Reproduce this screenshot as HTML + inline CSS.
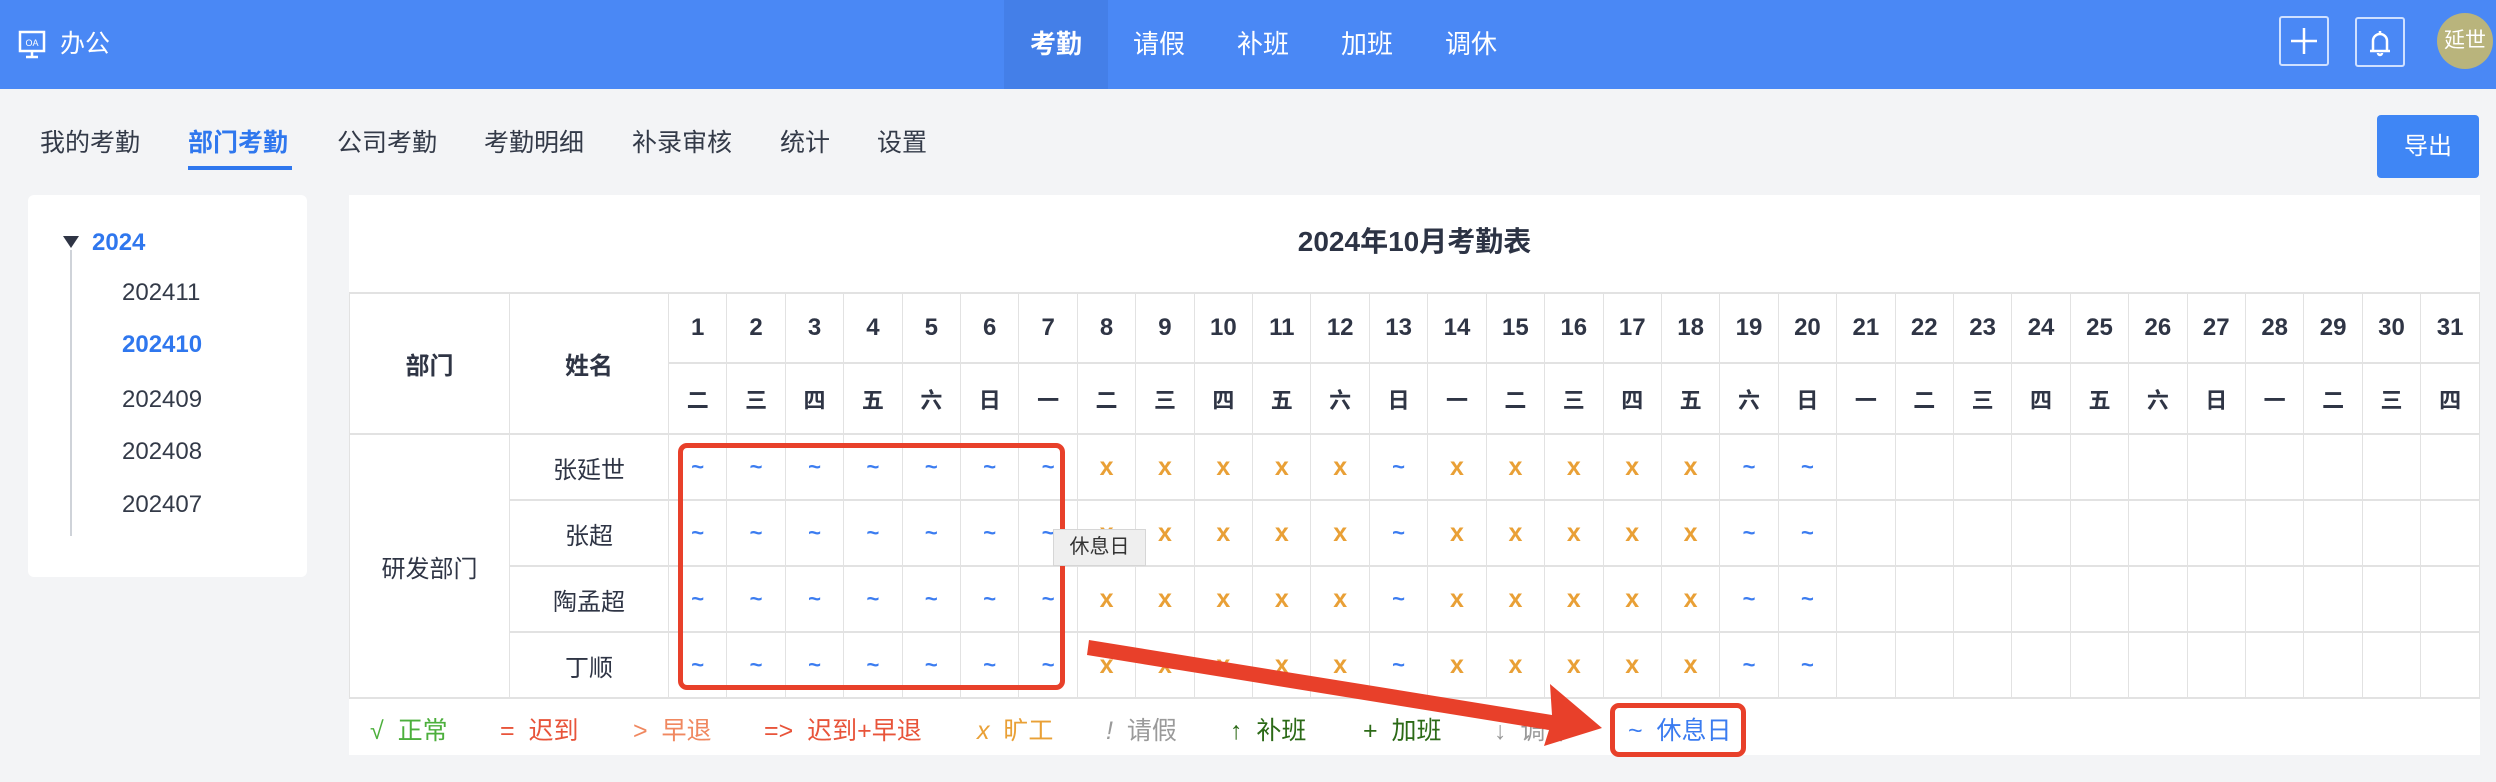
<!DOCTYPE html>
<html><head><meta charset="utf-8">
<style>
*{margin:0;padding:0;box-sizing:border-box}
body{width:2496px;height:782px;background:#f3f4f6;font-family:"Liberation Sans","Noto Sans CJK SC",sans-serif;position:relative;overflow:hidden;color:#2f3545}
.hd{position:absolute;left:0;top:0;width:2496px;height:89px;background:#4a88f5}
.abs{position:absolute;white-space:nowrap}
.nav{top:0;height:89px;line-height:89px;color:#fff;font-size:26px}
.sub{top:124px;line-height:38px;font-size:25px;color:#333a48}
.tree{font-size:24px;line-height:30px;color:#333a48}
table{position:absolute;left:349px;top:292px;width:2131px;border-collapse:collapse;table-layout:fixed;background:#fff}
td{border-top:2px solid #e2e2e2;border-bottom:2px solid #e2e2e2;border-left:1px solid #e2e2e2;border-right:1px solid #e2e2e2;text-align:center;font-size:24px;color:#2f3545;padding:0}
tr.h1 td{height:70px;font-weight:bold}
tr.h2 td{height:71px;font-size:22px;font-weight:bold}
tr.d td{height:66px}
td.t{color:#3b7cf0;font-weight:bold;font-size:22px}
td.x{color:#e9a036;font-weight:bold;font-size:25px}
.lg{top:714px;font-size:25px;line-height:34px}
</style></head><body>
<div class="hd"></div>
<svg class="abs" style="left:18px;top:30px" width="30" height="30" viewBox="0 0 30 30"><rect x="2" y="2" width="24" height="19" fill="none" stroke="#fff" stroke-width="2.5"/><text x="14" y="16" font-size="9" fill="#fff" text-anchor="middle" font-family="Liberation Sans">OA</text><path d="M14 21v6M8 27h12" stroke="#fff" stroke-width="2.5"/></svg>
<div class="abs nav" style="left:60px;font-size:25px">办公</div>
<div class="abs" style="left:1004px;top:0;width:104px;height:89px;background:#447fe8"></div>
<div class="abs nav" style="left:1030px;font-weight:bold">考勤</div>
<div class="abs nav" style="left:1133px">请假</div>
<div class="abs nav" style="left:1237px">补班</div>
<div class="abs nav" style="left:1341px">加班</div>
<div class="abs nav" style="left:1445px">调休</div>
<div class="abs" style="left:2279px;top:16px;width:50px;height:50px;border:2px solid #cfe0ff;border-radius:3px"></div>
<svg class="abs" style="left:2279px;top:16px" width="50" height="50"><path d="M25 12v26M12 25h26" stroke="#fff" stroke-width="2.5"/></svg>
<div class="abs" style="left:2355px;top:17px;width:50px;height:50px;border:2px solid #cfe0ff;border-radius:3px"></div>
<svg class="abs" style="left:2355px;top:17px" width="50" height="50"><path d="M18 34V24a7 7 0 0 1 14 0v10zM15 34h20M25 14v3M23 36a2 2 0 0 0 4 0" fill="none" stroke="#fff" stroke-width="2.5"/></svg>
<div class="abs" style="left:2437px;top:13px;width:56px;height:56px;border-radius:50%;background:#b9b47c;color:#fff;font-size:21px;line-height:56px;text-align:center">延世</div>

<div class="abs sub" style="left:40px">我的考勤</div>
<div class="abs sub" style="left:188px;color:#2f77ee;font-weight:bold">部门考勤</div>
<div class="abs" style="left:188px;top:166px;width:104px;height:4px;background:#2f77ee"></div>
<div class="abs sub" style="left:337px">公司考勤</div>
<div class="abs sub" style="left:484px">考勤明细</div>
<div class="abs sub" style="left:632px">补录审核</div>
<div class="abs sub" style="left:780px">统计</div>
<div class="abs sub" style="left:877px">设置</div>
<div class="abs" style="left:2377px;top:115px;width:102px;height:63px;background:#3f86f5;border-radius:4px;color:#fff;font-size:24px;line-height:63px;text-align:center">导出</div>

<div class="abs" style="left:28px;top:195px;width:279px;height:382px;background:#fff;border-radius:6px"></div>
<div class="abs" style="left:70px;top:250px;width:2px;height:286px;background:#cfd3d9"></div>
<svg class="abs" style="left:62px;top:235px" width="18" height="14"><path d="M1 1h16L9 13z" fill="#2f3545"/></svg>
<div class="abs tree" style="left:92px;top:228px;color:#2f77ee;font-weight:bold">2024</div>
<div class="abs tree" style="left:122px;top:278px">202411</div>
<div class="abs tree" style="left:122px;top:330px;color:#2f77ee;font-weight:bold">202410</div>
<div class="abs tree" style="left:122px;top:385px">202409</div>
<div class="abs tree" style="left:122px;top:437px">202408</div>
<div class="abs tree" style="left:122px;top:490px">202407</div>

<div class="abs" style="left:349px;top:195px;width:2131px;height:560px;background:#fff"></div>
<div class="abs" style="left:349px;top:222px;width:2131px;text-align:center;font-size:28px;font-weight:bold;line-height:40px;color:#2c3344">2024年10月考勤表</div>

<table>
<colgroup><col style="width:160px"><col style="width:159px"></colgroup>
<tr class="h1"><td rowspan="2" style="font-size:24px">部门</td><td rowspan="2" style="font-size:24px">姓名</td><td>1</td><td>2</td><td>3</td><td>4</td><td>5</td><td>6</td><td>7</td><td>8</td><td>9</td><td>10</td><td>11</td><td>12</td><td>13</td><td>14</td><td>15</td><td>16</td><td>17</td><td>18</td><td>19</td><td>20</td><td>21</td><td>22</td><td>23</td><td>24</td><td>25</td><td>26</td><td>27</td><td>28</td><td>29</td><td>30</td><td>31</td></tr>
<tr class="h2"><td>二</td><td>三</td><td>四</td><td>五</td><td>六</td><td>日</td><td>一</td><td>二</td><td>三</td><td>四</td><td>五</td><td>六</td><td>日</td><td>一</td><td>二</td><td>三</td><td>四</td><td>五</td><td>六</td><td>日</td><td>一</td><td>二</td><td>三</td><td>四</td><td>五</td><td>六</td><td>日</td><td>一</td><td>二</td><td>三</td><td>四</td></tr>
<tr class="d"><td rowspan="4" style="font-size:24px">研发部门</td><td>张延世</td><td class="t">~</td><td class="t">~</td><td class="t">~</td><td class="t">~</td><td class="t">~</td><td class="t">~</td><td class="t">~</td><td class="x">x</td><td class="x">x</td><td class="x">x</td><td class="x">x</td><td class="x">x</td><td class="t">~</td><td class="x">x</td><td class="x">x</td><td class="x">x</td><td class="x">x</td><td class="x">x</td><td class="t">~</td><td class="t">~</td><td></td><td></td><td></td><td></td><td></td><td></td><td></td><td></td><td></td><td></td><td></td></tr>
<tr class="d"><td>张超</td><td class="t">~</td><td class="t">~</td><td class="t">~</td><td class="t">~</td><td class="t">~</td><td class="t">~</td><td class="t">~</td><td class="x">x</td><td class="x">x</td><td class="x">x</td><td class="x">x</td><td class="x">x</td><td class="t">~</td><td class="x">x</td><td class="x">x</td><td class="x">x</td><td class="x">x</td><td class="x">x</td><td class="t">~</td><td class="t">~</td><td></td><td></td><td></td><td></td><td></td><td></td><td></td><td></td><td></td><td></td><td></td></tr>
<tr class="d"><td>陶孟超</td><td class="t">~</td><td class="t">~</td><td class="t">~</td><td class="t">~</td><td class="t">~</td><td class="t">~</td><td class="t">~</td><td class="x">x</td><td class="x">x</td><td class="x">x</td><td class="x">x</td><td class="x">x</td><td class="t">~</td><td class="x">x</td><td class="x">x</td><td class="x">x</td><td class="x">x</td><td class="x">x</td><td class="t">~</td><td class="t">~</td><td></td><td></td><td></td><td></td><td></td><td></td><td></td><td></td><td></td><td></td><td></td></tr>
<tr class="d"><td>丁顺</td><td class="t">~</td><td class="t">~</td><td class="t">~</td><td class="t">~</td><td class="t">~</td><td class="t">~</td><td class="t">~</td><td class="x">x</td><td class="x">x</td><td class="x">x</td><td class="x">x</td><td class="x">x</td><td class="t">~</td><td class="x">x</td><td class="x">x</td><td class="x">x</td><td class="x">x</td><td class="x">x</td><td class="t">~</td><td class="t">~</td><td></td><td></td><td></td><td></td><td></td><td></td><td></td><td></td><td></td><td></td><td></td></tr>
</table>

<div class="abs lg" style="left:370px;color:#4caf3c">√ &nbsp;正常</div>
<div class="abs lg" style="left:500px;color:#e8543a">= &nbsp;迟到</div>
<div class="abs lg" style="left:633px;color:#f08860">&gt; &nbsp;早退</div>
<div class="abs lg" style="left:764px;color:#e8543a">=&gt; &nbsp;迟到+早退</div>
<div class="abs lg" style="left:977px;color:#e9a036"><i>x</i> &nbsp;旷工</div>
<div class="abs lg" style="left:1106px;color:#9a9a9a"><i>!</i> &nbsp;请假</div>
<div class="abs lg" style="left:1230px;color:#2c6a17">↑ &nbsp;补班</div>
<div class="abs lg" style="left:1363px;color:#2c6a17">+ &nbsp;加班</div>
<div class="abs lg" style="left:1494px;color:#9a9a9a">↓ &nbsp;调休</div>
<div class="abs lg" style="left:1628px;color:#3b7cf0">~ &nbsp;休息日</div>

<div class="abs" style="left:678px;top:443px;width:387px;height:247px;border:5px solid #e8402a;border-radius:9px"></div>
<div class="abs" style="left:1053px;top:529px;width:93px;height:37px;background:#efefef;border:1px solid #d6d6d6;font-size:20px;line-height:35px;text-align:center;color:#333">休息日</div>
<div class="abs" style="left:1610px;top:703px;width:136px;height:54px;border:5px solid #e8402a;border-radius:9px"></div>
<svg class="abs" style="left:0;top:0" width="2496" height="782"><polygon points="1089,640 1552,715 1550,684 1602,728 1544,746 1549,730 1087,655" fill="#e8402a"/></svg>
</body></html>
